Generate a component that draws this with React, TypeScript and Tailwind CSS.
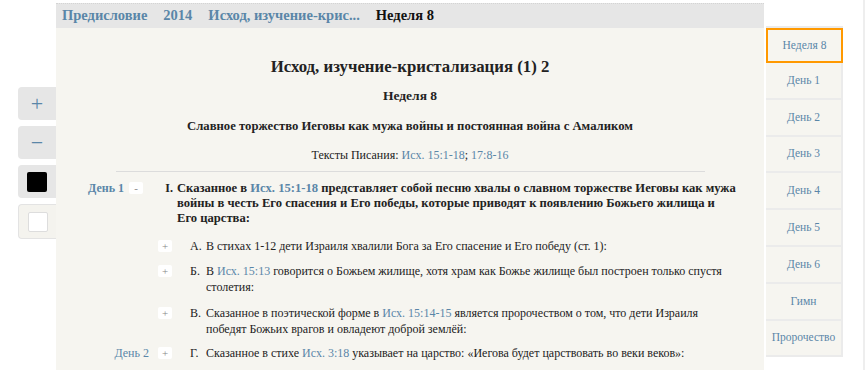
import React from 'react';

const navItems = ['День 1', 'День 2', 'День 3', 'День 4', 'День 5', 'День 6', 'Гимн', 'Пророчество'];

const Link: React.FC<{ children: React.ReactNode }> = ({ children }) => (
  <span className="text-[#5a86a8]">{children}</span>
);

const ToggleBtn: React.FC<{ sign: string }> = ({ sign }) => (
  <span className="flex h-[12px] w-[14px] shrink-0 items-center justify-center rounded-[2px] bg-white text-[11px] leading-none text-[#888]">
    {sign}
  </span>
);

interface SubPoint {
  day?: string;
  num: string;
  body: React.ReactNode;
  mt: string;
}

const subPoints: SubPoint[] = [
  {
    num: 'А.',
    mt: 'mt-[12px]',
    body: <>В стихах 1-12 дети Израиля хвалили Бога за Его спасение и Его победу (ст. 1):</>,
  },
  {
    num: 'Б.',
    mt: 'mt-[9px]',
    body: (
      <>
        В <Link>Исх. 15:13</Link> говорится о Божьем жилище, хотя храм как Божье жилище был построен только спустя
        столетия:
      </>
    ),
  },
  {
    num: 'В.',
    mt: 'mt-[10px]',
    body: (
      <>
        Сказанное в поэтической форме в <Link>Исх. 15:14-15</Link> является пророчеством о том, что дети Израиля
        победят Божьих врагов и овладеют доброй землёй:
      </>
    ),
  },
  {
    day: 'День 2',
    num: 'Г.',
    mt: 'mt-[8px]',
    body: (
      <>
        Сказанное в стихе <Link>Исх. 3:18</Link> указывает на царство: «Иегова будет царствовать во веки веков»:
      </>
    ),
  },
];

export default function App() {
  return (
    <div className="flex h-[370px] w-[865px] overflow-hidden bg-white font-['Liberation_Serif',serif] text-[#222]">
      {/* left tools */}
      <div className="flex w-[56px] shrink-0 flex-col gap-[6px] pl-[18px] pt-[87px]">
        <button className="flex h-[33px] w-[38px] items-center justify-center rounded-l-[4px] bg-[#e6e6e6] text-[22px] font-light leading-none text-[#5a86a8]">
          +
        </button>
        <button className="flex h-[33px] w-[38px] items-center justify-center rounded-l-[4px] bg-[#e6e6e6] text-[22px] font-light leading-none text-[#5a86a8]">
          −
        </button>
        <button className="flex h-[33px] w-[38px] items-center justify-center rounded-l-[4px] bg-[#e6e6e6]">
          <span className="h-[20px] w-[20px] rounded-[2px] bg-black" />
        </button>
        <button className="flex h-[35px] w-[38px] items-center justify-center rounded-l-[4px] border border-r-0 border-[#e3e3e3] bg-[#f4f3ee]">
          <span className="h-[20px] w-[20px] rounded-[2px] border border-[#ddd] bg-white" />
        </button>
      </div>

      {/* main panel */}
      <div className="w-[708px] shrink-0 pt-[3px]">
        <div className="flex h-[25px] items-center gap-[16px] border-t border-dotted border-[#d4d4d4] bg-[#e6e6e6] pl-[6px] text-[14.5px] font-bold">
          <span className="text-[#5a86a8]">Предисловие</span>
          <span className="text-[#5a86a8]">2014</span>
          <span className="text-[#5a86a8]">Исход, изучение-крис...</span>
          <span className="text-[#111]">Неделя 8</span>
        </div>
        <div className="h-[342px] bg-[#f6f5f0]">
          <div className="pt-[27px] text-center">
            <h1 className="text-[16.8px] font-bold leading-[24px]">Исход, изучение-кристализация (1) 2</h1>
            <h2 className="mt-[7px] text-[13.5px] font-bold leading-[20px]">Неделя 8</h2>
            <h3 className="mt-[10px] text-[12.7px] font-bold leading-[20px]">
              Славное торжество Иеговы как мужа войны и постоянная война с Амаликом
            </h3>
            <p className="mt-[9px] text-[12px] leading-[20px]">
              Тексты Писания: <Link>Исх. 15:1-18</Link>; <Link>17:8-16</Link>
            </p>
          </div>
          <div className="ml-[60px] mr-[59px] mt-[6px] border-t border-[#dcdcdc]" />

          <div className="pr-[24px] pt-[9px] text-[12px]">
            <div className="flex items-start">
              <span className="w-[68px] shrink-0 text-right font-bold leading-[15px] text-[#5a86a8]">День 1</span>
              <span className="ml-[5px] mt-[1px]">
                <ToggleBtn sign="-" />
              </span>
              <span className="w-[30px] shrink-0 text-right font-bold leading-[15px]">I.</span>
              <p className="ml-[4px] text-[12.6px] font-bold leading-[15px]">
                Сказанное в <Link>Исх. 15:1-18</Link> представляет собой песню хвалы о славном торжестве Иеговы как мужа
                войны в честь Его спасения и Его победы, которые приводят к появлению Божьего жилища и Его&nbsp;царства:
              </p>
            </div>

            {subPoints.map((p) => (
              <div key={p.num} className={`flex items-start ${p.mt}`}>
                <span className="w-[93px] shrink-0 text-right leading-[16px] text-[#5a86a8]">{p.day}</span>
                <span className="ml-[9px] mt-[2px]">
                  <ToggleBtn sign="+" />
                </span>
                <span className="ml-[18px] w-[16px] shrink-0 leading-[16px]">{p.num}</span>
                <p className="leading-[16px]">{p.body}</p>
              </div>
            ))}
          </div>
        </div>
      </div>

      {/* right nav */}
      <div className="ml-[2px] w-[77px] shrink-0 pt-[26px]">
        <div className="border-t-2 border-[#ebebeb]">
          <div className="flex h-[35px] items-center justify-center border-2 border-[#ff9900] bg-[#f6f5f0] text-[11.5px] text-[#5a86a8]">
            Неделя 8
          </div>
          {navItems.map((n) => (
            <div
              key={n}
              className="flex h-[36.8px] items-center justify-center border-b-2 border-r-2 border-[#ebebeb] bg-[#f6f5f0] text-[11.5px] text-[#5a86a8]"
            >
              {n}
            </div>
          ))}
        </div>
      </div>
      <div className="ml-auto w-[2px] bg-[#eeeeee]" />
    </div>
  );
}
